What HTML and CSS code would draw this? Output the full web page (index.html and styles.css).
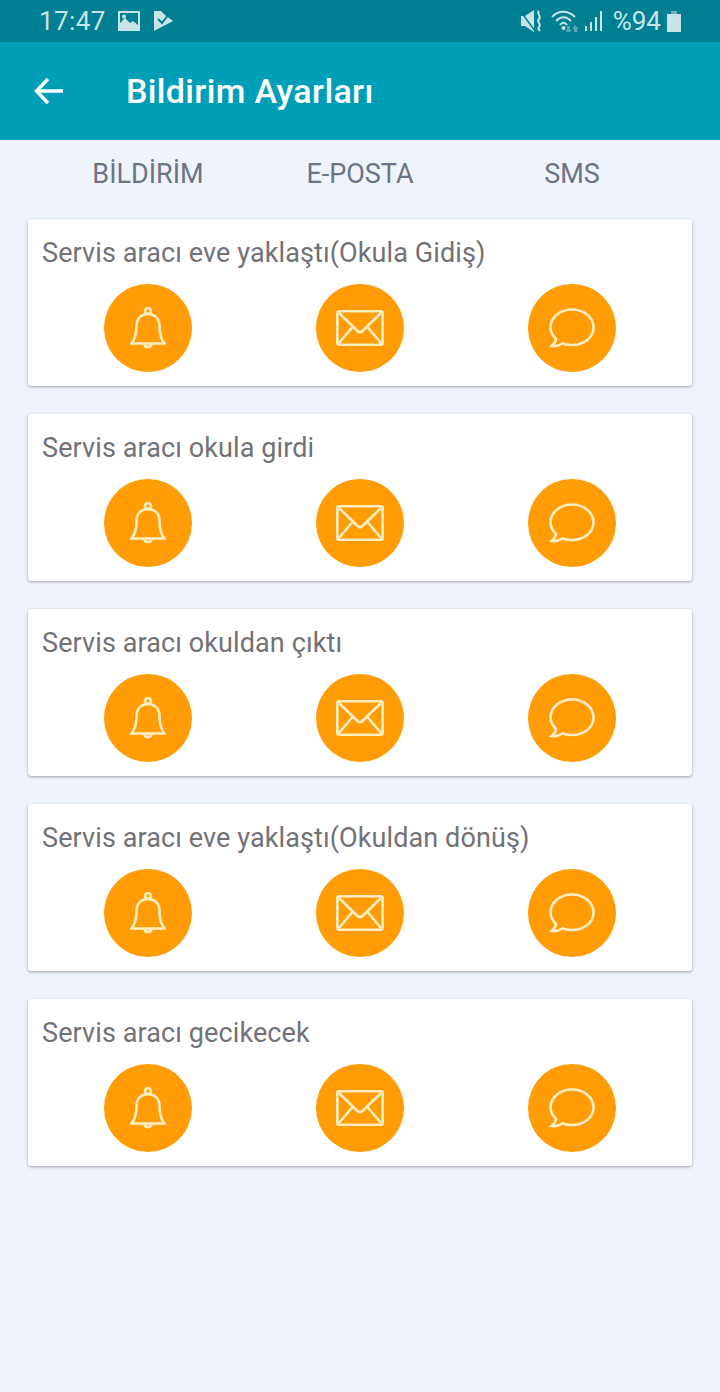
FILE: index.html
```html
<!DOCTYPE html>
<html lang="en">
<head>
  <meta charset="UTF-8" />
  <meta name="viewport" content="width=device-width, initial-scale=1.0"/>
  <title>Bildirim Ayarları</title>
  <link rel="stylesheet" href="styles.css">
</head>
<body>

  <svg class="icon-defs" width="0" height="0" aria-hidden="true">
    <symbol id="bell" viewBox="0 0 36 42">
      <circle cx="18" cy="4" r="3"/>
      <path d="M1.500 36.500 C6 31 6.500 25 6.500 19 C6.500 11.500 11.500 7 18 7 C24.500 7 29.500 11.500 29.500 19 C29.500 25 30 31 34.500 36.500 Z"/>
      <path d="M14.500 36.500 C14.500 41.300 21.500 41.300 21.500 36.500"/>
    </symbol>
    <symbol id="mail" viewBox="0 0 48 36">
      <rect x="1.300" y="1.300" width="45.400" height="33.400" rx="2"/>
      <path d="M3 3 L21.500 21 Q24 23.500 26.500 21 L45 3"/>
      <path d="M2.500 33.500 L17 16.500"/>
      <path d="M45.500 33.500 L31 16.500"/>
    </symbol>
    <symbol id="chat" viewBox="0 0 46 40">
      <path d="M7 31 C3.500 27.500 1.500 24 1.500 19.500 C1.500 9.500 11 1.500 23 1.500 C35 1.500 44.500 9.500 44.500 19.500 C44.500 29.500 35 37 23 37 C19.500 37 16.500 36.500 13.500 35.500 C10.500 37.500 7 38.500 2.500 38 C5 36 6.800 34 7 31 Z"/>
    </symbol>
  </svg>

  <div class="status-bar">
    <div class="status-left">
      <span class="clock">17:47</span>
      <svg class="st-icon" width="22" height="20" viewBox="0 0 22 20">
        <path fill="#c9e4e9" fill-rule="evenodd" d="M0 0H22V20H0Z M2 2V12L7 7L12 12L15 10L20 14V2Z"/>
        <circle cx="6" cy="5.500" r="2" fill="#c9e4e9"/>
      </svg>
      <svg class="st-icon" width="19" height="20" viewBox="0 0 19 20">
        <path fill="#c9e4e9" d="M0 0H7L11 4L19 10L0 20Z"/>
        <path fill="none" stroke="#007f93" stroke-width="2" d="M4 8L8 12L15 3"/>
      </svg>
    </div>
    <div class="status-right">
      <svg class="st-icon" width="22" height="22" viewBox="0 0 22 22">
        <path fill="#c9e4e9" d="M0 6H4L13 0V22L4 16H0Z"/>
        <path stroke="#007f93" stroke-width="1.500" d="M0 2L14 21"/>
        <path fill="none" stroke="#c9e4e9" stroke-width="2" d="M18 1C15 4 21 6 18 9C15 12 21 14 18 17C17 18 18 20 19 21"/>
      </svg>
      <svg class="st-icon wifi" width="28" height="22" viewBox="0 0 28 22">
        <g fill="none" stroke="#c9e4e9" stroke-width="2">
          <path d="M1 7C7 0 17 0 24 7"/>
          <path d="M5 11C10 6 15 6 20 11"/>
          <path d="M9 15C11 12 14 12 16 15"/>
        </g>
        <circle cx="12.500" cy="18" r="2" fill="#c9e4e9"/>
        <path fill="#5aa7b6" d="M16 16H19V20H21L17.500 23L14 20H16Z M24 15L28 19H26V22H23V19H21Z"/>
      </svg>
      <svg class="st-icon" width="18" height="20" viewBox="0 0 18 20">
        <path fill="#c9e4e9" d="M0 15H2V20H0Z M5 11H7V20H5Z M10 6H12V20H10Z M15 0H17V20H15Z"/>
      </svg>
      <span class="battery-text">%94</span>
      <svg class="st-icon" width="14" height="21" viewBox="0 0 14 21">
        <path fill="#6fb0bd" d="M4 0H10V3H4Z"/>
        <path fill="#c9e4e9" d="M0 3H14V21H0Z"/>
      </svg>
    </div>
  </div>

  <header class="app-bar">
    <svg class="back" width="30" height="28" viewBox="0 0 30 28">
      <path d="M29 14H3 M14 2L2.500 14L14 26"/>
    </svg>
    <h1>Bildirim Ayarları</h1>
  </header>

  <div class="tabs">
    <span>BİLDİRİM</span>
    <span>E-POSTA</span>
    <span>SMS</span>
  </div>

  <main class="list">
    <section class="card">
      <h2>Servis aracı eve yaklaştı(Okula Gidiş)</h2>
      <div class="actions">
        <div class="action"><svg class="i-bell"><use href="#bell"/></svg></div>
        <div class="action"><svg class="i-mail"><use href="#mail"/></svg></div>
        <div class="action"><svg class="i-chat"><use href="#chat"/></svg></div>
      </div>
    </section>
    <section class="card">
      <h2>Servis aracı okula girdi</h2>
      <div class="actions">
        <div class="action"><svg class="i-bell"><use href="#bell"/></svg></div>
        <div class="action"><svg class="i-mail"><use href="#mail"/></svg></div>
        <div class="action"><svg class="i-chat"><use href="#chat"/></svg></div>
      </div>
    </section>
    <section class="card">
      <h2>Servis aracı okuldan çıktı</h2>
      <div class="actions">
        <div class="action"><svg class="i-bell"><use href="#bell"/></svg></div>
        <div class="action"><svg class="i-mail"><use href="#mail"/></svg></div>
        <div class="action"><svg class="i-chat"><use href="#chat"/></svg></div>
      </div>
    </section>
    <section class="card">
      <h2>Servis aracı eve yaklaştı(Okuldan dönüş)</h2>
      <div class="actions">
        <div class="action"><svg class="i-bell"><use href="#bell"/></svg></div>
        <div class="action"><svg class="i-mail"><use href="#mail"/></svg></div>
        <div class="action"><svg class="i-chat"><use href="#chat"/></svg></div>
      </div>
    </section>
    <section class="card">
      <h2>Servis aracı gecikecek</h2>
      <div class="actions">
        <div class="action"><svg class="i-bell"><use href="#bell"/></svg></div>
        <div class="action"><svg class="i-mail"><use href="#mail"/></svg></div>
        <div class="action"><svg class="i-chat"><use href="#chat"/></svg></div>
      </div>
    </section>
  </main>

</body>
</html>
```

FILE: styles.css
```css
* {
  margin: 0;
  padding: 0;
  box-sizing: border-box;
}

body {
  font-family: Roboto, Arial, sans-serif;
  background-color: #eef3fc;
  width: 720px;
  height: 1392px;
  overflow: hidden;
}

.icon-defs {
  display: block;
  height: 0;
}

.status-bar {
  height: 42px;
  background-color: #007f93;
  color: #c9e4e9;
  display: flex;
  align-items: center;
  justify-content: space-between;
  padding: 0 39px 0 39px;
}

.status-left,
.status-right {
  display: flex;
  align-items: center;
}

.clock {
  font-size: 26px;
  letter-spacing: 0.4px;
  margin-right: 12px;
}

.status-left .st-icon {
  margin-right: 14px;
}

.status-right {
  gap: 6px;
}

.battery-text {
  font-size: 26px;
  margin-left: 4px;
}

.wifi {
  margin-left: 2px;
}

.app-bar {
  height: 98px;
  background-color: #009fb7;
  display: flex;
  align-items: center;
  padding-left: 34px;
}

.back {
  fill: none;
  stroke: #fff;
  stroke-width: 3.4;
  margin-right: 62px;
}

h1 {
  font-size: 34px;
  font-weight: 500;
  letter-spacing: 0.35px;
  color: #fff;
}

.tabs {
  height: 79px;
  padding: 0 42px 12px;
  display: grid;
  grid-template-columns: repeat(3, 1fr);
  align-items: center;
  text-align: center;
  font-size: 27px;
  color: #6d7484;
}

.list {
  display: flex;
  flex-direction: column;
  gap: 28px;
  padding: 0 28px;
}

.card {
  height: 167px;
  background-color: #fff;
  border-radius: 3px;
  box-shadow: 0 1px 3px rgba(0, 0, 0, 0.35);
  padding: 18px 14px 0;
}

h2 {
  font-size: 27px;
  font-weight: 400;
  letter-spacing: 0.1px;
  line-height: 32px;
  color: #727276;
}

.actions {
  display: grid;
  grid-template-columns: repeat(3, 1fr);
  margin-top: 15px;
}

.action {
  width: 88px;
  height: 88px;
  border-radius: 50%;
  background-color: #ff9c06;
  justify-self: center;
  display: flex;
  align-items: center;
  justify-content: center;
}

.action svg {
  fill: none;
  stroke: #ffeec2;
  stroke-width: 2.6;
}

.i-bell {
  width: 36px;
  height: 42px;
}

.i-mail {
  width: 48px;
  height: 36px;
}

.i-chat {
  width: 46px;
  height: 40px;
}
```
